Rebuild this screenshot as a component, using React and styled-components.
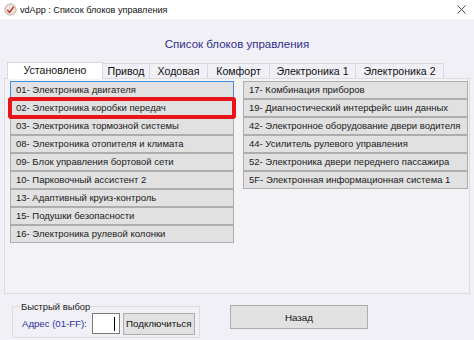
import React from "react"
import styled, { createGlobalStyle } from "styled-components"

const Global = createGlobalStyle`
  html, body { margin: 0; padding: 0; }
  body {
    width: 474px;
    height: 340px;
    overflow: hidden;
    background: #ffffff;
    font-family: "Liberation Sans", Arial, sans-serif;
  }
`

const Window = styled.div`
  width: 474px;
  height: 340px;
  display: flex;
  flex-direction: column;
  background: #f0f0f6;
`

const TitleBar = styled.div`
  height: 19px;
  flex-shrink: 0;
  background: #ffffff;
  display: flex;
  align-items: center;
  padding: 0 0 0 4px;
  font-size: 9.1px;
  color: #111;
  span { margin-left: 3px; }
`

const Close = styled.div`
  margin-left: auto;
  width: 26px;
  display: flex;
  justify-content: center;
`

const Heading = styled.div`
  text-align: center;
  color: #2f2f8c;
  font-size: 11.5px;
  padding: 19px 0 0;
  height: 23px;
  flex-shrink: 0;
`

const Tabs = styled.div`
  display: flex;
  padding-left: 8px;
  height: 17px;
  flex-shrink: 0;
  align-items: flex-end;
`

const Tab = styled.div`
  box-sizing: border-box;
  width: ${p => p.w}px;
  text-align: center;
  font-size: 10.6px;
  color: #111;
  height: ${p => (p.active ? "17px" : "15px")};
  line-height: ${p => (p.active ? "15px" : "14px")};
  background: ${p => (p.active ? "#fff" : "#f0f0f6")};
  border: 1px solid #d9d9d9;
  border-bottom: none;
  margin-left: -1px;
  position: relative;
  z-index: ${p => (p.active ? 2 : 1)};
  margin-bottom: ${p => (p.active ? "-1px" : "0")};
`

const Panel = styled.div`
  margin: 0 4px 0 4px;
  border: 1px solid #dcdcdc;
  background: #f2f2f7;
  height: 212px;
  flex-shrink: 0;
  padding: 2px 1px 0 5px;
  display: grid;
  grid-template-columns: 224px 225px;
  column-gap: 9px;
  align-content: start;
`

const Column = styled.div`
  display: flex;
  flex-direction: column;
`

const Item = styled.div`
  height: 16px;
  line-height: 16px;
  border: 1px solid ${p => (p.focused ? "#3b8ee0" : "#adadad")};
  background: #e1e1e1;
  font-size: 9.5px;
  color: #1a1a1a;
  padding-left: 5px;
  white-space: nowrap;
  overflow: hidden;
  position: relative;
  ${p => p.marked && `
    outline: 4px solid #e8141a;
    outline-offset: -2px;
    border-radius: 1px;
    z-index: 2;
  `}
`

const Footer = styled.div`
  flex: 1;
  display: flex;
  align-items: flex-end;
  padding: 0 0 2px 12px;
`

const Group = styled.fieldset`
  margin: 0;
  width: 188px;
  height: 37px;
  box-sizing: border-box;
  border: 1px solid #dcdcdc;
  padding: 0 0 2px 9px;
  display: flex;
  align-items: center;
  gap: 3px;
  legend {
    font-size: 9.4px;
    color: #222;
    padding: 0 1px;
    margin-left: -2px;
  }
`

const AddrLabel = styled.span`
  font-size: 9.6px;
  color: #2c2ca0;
  margin-right: 2px;
`

const Input = styled.div`
  width: 28px;
  height: 21px;
  background: #fff;
  border: 1px solid #7a7a7a;
  display: flex;
  justify-content: flex-end;
  align-items: center;
  padding-right: 4px;
  box-sizing: border-box;
  i { width: 1px; height: 14px; background: #000; }
`

const Button = styled.div`
  box-sizing: border-box;
  width: ${p => p.w}px;
  height: ${p => p.h}px;
  background: #e1e1e1;
  border: 1px solid #adadad;
  font-size: 9.8px;
  color: #111;
  display: flex;
  align-items: center;
  justify-content: center;
  margin-left: ${p => p.ml || 0}px;
  margin-bottom: ${p => p.mb || 0}px;
`

const AppIcon = () => (
  <svg width="13" height="13" viewBox="0 0 14 14">
    <circle cx="7" cy="7" r="6" fill="#f3e3dc" stroke="#b9a39a" />
    <path d="M3.5 7.5 L6 10 L10.5 4" stroke="#c0392b" strokeWidth="1.6" fill="none" />
  </svg>
)

const left = [
  "01- Электроника двигателя",
  "02- Электроника коробки передач",
  "03- Электроника тормозной системы",
  "08- Электроника отопителя и климата",
  "09- Блок управления бортовой сети",
  "10- Парковочный ассистент 2",
  "13- Адаптивный круиз-контроль",
  "15- Подушки безопасности",
  "16- Электроника рулевой колонки",
]

const right = [
  "17- Комбинация приборов",
  "19- Диагностический интерфейс шин данных",
  "42- Электронное оборудование двери водителя",
  "44- Усилитель рулевого управления",
  "52- Электроника двери переднего пассажира",
  "5F- Электронная информационная система 1",
]

const tabs = [
  ["Установлено", 96],
  ["Привод", 48],
  ["Ходовая", 59],
  ["Комфорт", 63],
  ["Электроника 1", 87],
  ["Электроника 2", 89],
]

export default function App() {
  return (
    <Window>
      <Global />
      <TitleBar>
        <AppIcon />
        <span>vdApp : Список блоков управления</span>
        <Close>
          <svg width="9" height="9" viewBox="0 0 10 10">
            <path d="M0.5 0.5 L9.5 9.5 M9.5 0.5 L0.5 9.5" stroke="#333" strokeWidth="1" />
          </svg>
        </Close>
      </TitleBar>
      <Heading>Список блоков управления</Heading>
      <Tabs>
        {tabs.map(([t, w], i) => (
          <Tab key={t} active={i === 0} w={w}>{t}</Tab>
        ))}
      </Tabs>
      <Panel>
        <Column>
          {left.map((t, i) => (
            <Item key={t} focused={i === 0} marked={i === 1}>{t}</Item>
          ))}
        </Column>
        <Column>
          {right.map(t => <Item key={t}>{t}</Item>)}
        </Column>
      </Panel>
      <Footer>
        <Group>
          <legend>Быстрый выбор</legend>
          <AddrLabel>Адрес (01-FF):</AddrLabel>
          <Input><i /></Input>
          <Button w={72} h={22}>Подключиться</Button>
        </Group>
        <Button w={138} h={24} ml={30} mb={9}>Назад</Button>
      </Footer>
    </Window>
  )
}
